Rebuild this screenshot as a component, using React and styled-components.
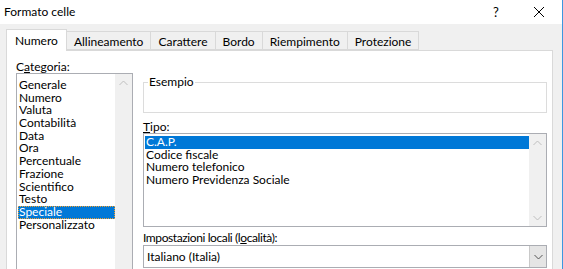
import React from 'react'
import styled, { createGlobalStyle } from 'styled-components'

const GlobalStyle = createGlobalStyle`
	html, body {
		margin: 0;
		padding: 0;
		background: #f0f0f0;
	}
	body {
		font-family: Lato, 'Noto Sans', sans-serif;
		font-size: 12px;
		color: #000;
	}
`

const categories = [
	'Generale',
	'Numero',
	'Valuta',
	'Contabilità',
	'Data',
	'Ora',
	'Percentuale',
	'Frazione',
	'Scientifico',
	'Testo',
	'Speciale',
	'Personalizzato',
]

const types = ['C.A.P.', 'Codice fiscale', 'Numero telefonico', 'Numero Previdenza  Sociale']

const tabs = ['Numero', 'Allineamento', 'Carattere', 'Bordo', 'Riempimento', 'Protezione']

function Chevron({ up }) {
	return (
		<svg width="9" height="6" viewBox="0 0 9 6">
			<path
				d={up ? 'M0.5 5 L4.5 1 L8.5 5' : 'M0.5 1 L4.5 5 L8.5 1'}
				fill="none"
				stroke="currentColor"
				strokeWidth="1"
			/>
		</svg>
	)
}

export default function App() {
	return (
		<>
			<GlobalStyle />
			<Window>
				<TitleBar>
					<Title>Formato celle</Title>
					<TitleButton $width={40}>?</TitleButton>
					<TitleButton $width={46}>
						<svg width="12" height="12" viewBox="0 0 12 12">
							<path d="M1 1 L11 11 M11 1 L1 11" stroke="#000" strokeWidth="1" />
						</svg>
					</TitleButton>
				</TitleBar>

				<Body>
					<TabRow>
						{tabs.map((t, i) => (
							<Tab key={t} $active={i === 0}>
								{t}
							</Tab>
						))}
					</TabRow>

					<Panel>
						<LeftColumn>
							<Label>
								C<u>a</u>tegoria:
							</Label>
							<ListBox $height={200}>
								<Items>
									{categories.map((c) => (
										<Item key={c} $selected={c === 'Speciale'} $focus>
											{c}
										</Item>
									))}
								</Items>
								<ScrollBar>
									<Arrow>
										<Chevron up />
									</Arrow>
								</ScrollBar>
							</ListBox>
						</LeftColumn>

						<RightColumn>
							<GroupBox>
								<Legend>Esempio</Legend>
							</GroupBox>

							<Label $top={7}>
								<u>T</u>ipo:
							</Label>
							<ListBox $height={94}>
								<Items $pad={2}>
									{types.map((t) => (
										<Item key={t} $selected={t === 'C.A.P.'}>
											{t}
										</Item>
									))}
								</Items>
								<ScrollBar>
									<Arrow>
										<Chevron up />
									</Arrow>
									<Arrow>
										<Chevron />
									</Arrow>
								</ScrollBar>
							</ListBox>

							<Label $top={4} $tight>
								Impostazioni locali (l<u>o</u>calità):
							</Label>
							<Select>
								<SelectValue>Italiano (Italia)</SelectValue>
								<SelectButton>
									<Chevron />
								</SelectButton>
							</Select>
						</RightColumn>
					</Panel>
				</Body>
			</Window>
		</>
	)
}

const Window = styled.div`
	width: 563px;
	height: 269px;
	overflow: hidden;
	box-sizing: border-box;
	border-right: 1px solid #3d97e0;
	display: flex;
	flex-direction: column;
	background: #f0f0f0;
`

const TitleBar = styled.div`
	height: 24px;
	flex: none;
	background: #fff;
	display: flex;
	align-items: center;
	padding-left: 4px;
`

const Title = styled.div`
	flex: 1;
	font-size: 12px;
	line-height: 22px;
`

const TitleButton = styled.div`
	width: ${(p) => p.$width}px;
	height: 24px;
	display: flex;
	align-items: center;
	justify-content: center;
	font-size: 13px;
`

const Body = styled.div`
	flex: 1;
	padding: 6px 9px 0 6px;
	display: flex;
	flex-direction: column;
	min-height: 0;
`

const TabRow = styled.div`
	display: flex;
	align-items: flex-end;
	height: 21px;
	position: relative;
	z-index: 1;
	margin-bottom: -1px;
`

const Tab = styled.div`
	box-sizing: border-box;
	height: ${(p) => (p.$active ? '22px' : '19px')};
	padding: 0 ${(p) => (p.$active ? '8px' : '7px')};
	border: 1px solid #d9d9d9;
	border-bottom: ${(p) => (p.$active ? 'none' : '1px solid #d9d9d9')};
	margin-left: ${(p) => (p.$active ? '0' : '-1px')};
	background: ${(p) => (p.$active ? '#fff' : '#f0f0f0')};
	line-height: ${(p) => (p.$active ? '21px' : '17px')};
	white-space: nowrap;
	padding-top: ${(p) => (p.$active ? '0' : '1px')};
	margin-bottom: ${(p) => (p.$active ? '0' : '1px')};
`

const Panel = styled.div`
	flex: 1;
	background: #fff;
	border: 1px solid #d9d9d9;
	border-bottom: none;
	padding: 9px 5px 0 9px;
	display: flex;
	gap: 10px;
	min-height: 0;
`

const LeftColumn = styled.div`
	width: 117px;
	display: flex;
	flex-direction: column;
`

const RightColumn = styled.div`
	flex: 1;
	display: flex;
	flex-direction: column;
	padding-top: 22px;
`

const Label = styled.div`
	line-height: 13px;
	height: 13px;
	margin-top: ${(p) => p.$top || 0}px;
	white-space: nowrap;
	letter-spacing: ${(p) => (p.$tight ? '-0.4px' : 'normal')};
`

const ListBox = styled.div`
	box-sizing: border-box;
	height: ${(p) => p.$height}px;
	flex: none;
	border: 1px solid #abadb3;
	display: flex;
	background: #fff;
`

const Items = styled.div`
	flex: 1;
	padding: ${(p) => (p.$pad != null ? p.$pad : 5)}px 0 0 1px;
`

const Item = styled.div`
	height: 12.7px;
	line-height: 12.7px;
	padding-left: 1px;
	white-space: nowrap;
	background: ${(p) => (p.$selected ? '#0078d7' : 'transparent')};
	color: ${(p) => (p.$selected ? '#fff' : '#000')};
	outline: ${(p) => (p.$selected && p.$focus ? '1px dotted #f0a030' : 'none')};
	outline-offset: -1px;
`

const ScrollBar = styled.div`
	width: 17px;
	background: #f0f0f0;
	display: flex;
	flex-direction: column;
	justify-content: space-between;
`

const Arrow = styled.div`
	height: 17px;
	display: flex;
	align-items: center;
	justify-content: center;
	color: #bfbfbf;
`

const GroupBox = styled.div`
	box-sizing: border-box;
	height: 31px;
	border: 1px solid #dcdcdc;
	position: relative;
`

const Legend = styled.span`
	position: absolute;
	top: -8px;
	left: 4px;
	padding: 0 1px;
	background: #fff;
	line-height: 14px;
`

const Select = styled.div`
	box-sizing: border-box;
	margin-top: 1px;
	height: 23px;
	border: 1px solid #abadb3;
	display: flex;
	align-items: center;
`

const SelectValue = styled.div`
	flex: 1;
	padding-left: 3px;
`

const SelectButton = styled.div`
	box-sizing: border-box;
	width: 17px;
	height: 21px;
	background: #e5e5e5;
	border-left: 1px solid #c9c9c9;
	display: flex;
	align-items: center;
	justify-content: center;
	color: #555;
`
